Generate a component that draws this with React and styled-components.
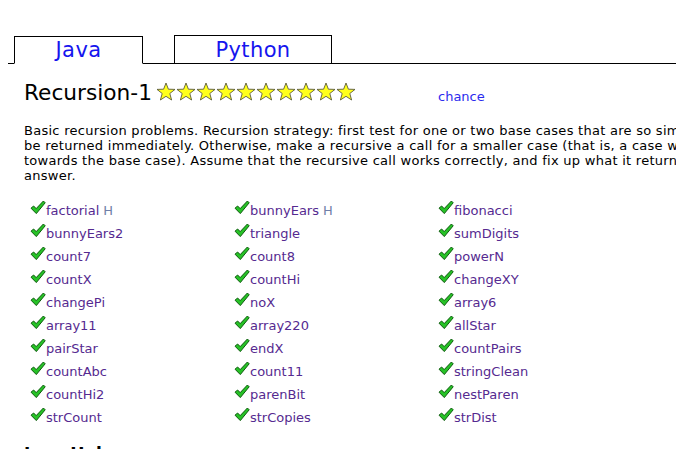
import React from "react";
import styled, { createGlobalStyle } from "styled-components";

const GlobalStyle = createGlobalStyle`
  html {
    background: #fff;
    overflow: hidden;
  }
  body {
    margin: 8px 0 8px 8px;
    font-family: "DejaVu Sans", Verdana, sans-serif;
    color: #000;
  }
`;

const TabBar = styled.div`
  display: flex;
  align-items: flex-end;
  gap: 31px;
  margin-top: 27px;
  padding-left: 6px;
  border-bottom: 1px solid #000;
`;

const Tab = styled.a`
  display: flex;
  align-items: center;
  justify-content: center;
  box-sizing: border-box;
  width: ${(p) => p.w}px;
  height: 28px;
  border: 1px solid #000;
  border-bottom: ${(p) => (p.active ? "1px solid #fff" : "none")};
  margin-bottom: ${(p) => (p.active ? "-1px" : "0")};
  font-size: 21px;
  letter-spacing: 0.4px;
  color: #1515ee;
  text-decoration: none;
  background: #fff;
`;

const Content = styled.div`
  padding-left: 16px;
`;

const TitleRow = styled.div`
  display: flex;
  align-items: center;
  height: 28px;
  margin-top: 14px;
`;

const Title = styled.h1`
  margin: 0;
  font-size: 21.7px;
  font-weight: normal;
  white-space: nowrap;
`;

const Stars = styled.div`
  display: flex;
  margin-left: 4px;
  width: 282px;
`;

const ChanceLink = styled.a`
  font-size: 13px;
  color: #2b2bee;
  text-decoration: none;
  padding-top: 8px;
`;

const Intro = styled.p`
  margin: 17px 0 0;
  font-size: 13px;
  line-height: 15px;
  letter-spacing: 0.27px;
  white-space: nowrap;
`;

const ProblemGrid = styled.div`
  display: grid;
  grid-template-columns: repeat(3, 204px);
  grid-auto-rows: 23px;
  margin-top: 12px;
  padding-left: 6px;
`;

const Problem = styled.div`
  display: flex;
  align-items: flex-end;
  font-size: 13px;
  white-space: nowrap;
`;

const ProblemLink = styled.a`
  color: #552a90;
  text-decoration: none;
`;

const Hint = styled.span`
  color: #6f7fa8;
  margin-left: 4px;
`;

const HelpTitle = styled.h2`
  margin: 19px 0 0;
  font-size: 17px;
  font-weight: bold;
`;

const Star = () => (
  <svg width="20" height="20" viewBox="0 0 20 20">
    <polygon
      points="10,1 12.4,7.2 19,7.4 13.8,11.5 15.6,18 10,14.3 4.4,18 6.2,11.5 1,7.4 7.6,7.2"
      fill="#ffff1a"
      stroke="#5a5a3a"
      strokeWidth="0.9"
      strokeLinejoin="round"
    />
  </svg>
);

const Check = () => (
  <svg width="16" height="15" viewBox="0 0 16 15" style={{ marginBottom: 3 }}>
    <path
      d="M1 8.2 L3.6 6 L6.2 8.6 L13.4 1 L15.2 2.8 L6.3 13.6 Z"
      fill="#26c226"
      stroke="#0d5a0d"
      strokeWidth="1"
      strokeLinejoin="round"
    />
  </svg>
);

const problems = [
  ["factorial", true], ["bunnyEars", true], ["fibonacci"],
  ["bunnyEars2"], ["triangle"], ["sumDigits"],
  ["count7"], ["count8"], ["powerN"],
  ["countX"], ["countHi"], ["changeXY"],
  ["changePi"], ["noX"], ["array6"],
  ["array11"], ["array220"], ["allStar"],
  ["pairStar"], ["endX"], ["countPairs"],
  ["countAbc"], ["count11"], ["stringClean"],
  ["countHi2"], ["parenBit"], ["nestParen"],
  ["strCount"], ["strCopies"], ["strDist"],
];

export default function App() {
  return (
    <>
      <GlobalStyle />
      <TabBar>
        <Tab active w={129}>Java</Tab>
        <Tab w={158}>Python</Tab>
      </TabBar>
      <Content>
        <TitleRow>
          <Title>Recursion-1</Title>
          <Stars>
            {Array.from({ length: 10 }).map((_, i) => (
              <Star key={i} />
            ))}
          </Stars>
          <ChanceLink>chance</ChanceLink>
        </TitleRow>
        <Intro>
          Basic recursion problems. Recursion strategy: first test for one or two base cases that are so simple, the answer can
          <br />
          be returned immediately. Otherwise, make a recursive a call for a smaller case (that is, a case which is a step
          <br />
          towards the base case). Assume that the recursive call works correctly, and fix up what it returns to make the
          <br />
          answer.
        </Intro>
        <ProblemGrid>
          {problems.map(([name, hint]) => (
            <Problem key={name}>
              <Check />
              <ProblemLink>{name}</ProblemLink>
              {hint && <Hint>H</Hint>}
            </Problem>
          ))}
        </ProblemGrid>
        <HelpTitle>Java Help</HelpTitle>
      </Content>
    </>
  );
}
